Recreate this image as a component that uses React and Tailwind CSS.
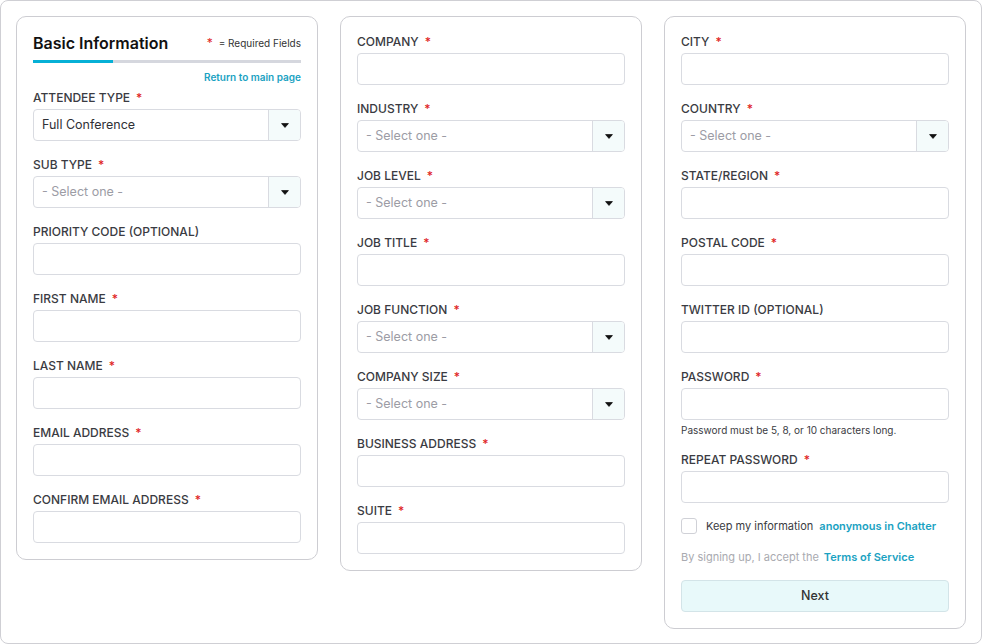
import React from 'react';

const FONT = { fontFamily: 'Inter, "Noto Sans", sans-serif' };

function Label({ text, required }) {
  return (
    <div className="h-4 leading-4 text-[12px] font-medium text-[#3a3b42] pt-px">
      {text}
      {required && <span className="ml-[6px] text-[#e02424]">*</span>}
    </div>
  );
}

function TextInput() {
  return <div className="mt-1 h-8 rounded-[4px] border border-[#d9dbe1] bg-white" />;
}

function Select({ value }) {
  return (
    <div className="mt-1 h-8 flex rounded-[4px] border border-[#d9dbe1] bg-white overflow-hidden">
      <div className={`flex-1 flex items-center pl-[8px] text-[12.5px] ${value ? 'text-[#2f3036]' : 'text-[#9c9ca5]'}`}>
        {value || '- Select one -'}
      </div>
      <div className="w-[32px] flex items-center justify-center border-l border-[#d9dbe1] bg-[#f4fbfb]">
        <svg width="8" height="5" viewBox="0 0 8 5">
          <path d="M0.6 0.6h6.8L4 4.4z" fill="#111" stroke="#111" strokeWidth="0.8" strokeLinejoin="round" />
        </svg>
      </div>
    </div>
  );
}

function Field({ label, required, select, value, children }) {
  return (
    <div>
      <Label text={label} required={required} />
      {select ? <Select value={value} /> : <TextInput />}
      {children}
    </div>
  );
}

function Panel({ children }) {
  return (
    <div className="w-[302px] shrink-0 rounded-[10px] border border-[#cdcdd2] bg-white p-4 flex flex-col">
      {children}
    </div>
  );
}

export default function App() {
  return (
    <div style={FONT} className="w-[982px] h-[644px] bg-white">
      <div className="w-full h-full rounded-lg border border-[#cfcfd4] p-[15px] flex items-start gap-[22px]">
        <Panel>
          <div className="h-5 flex items-center justify-between">
            <div className="text-[16px] leading-5 font-semibold text-[#111]">Basic Information</div>
            <div className="text-[10px] text-[#333] flex items-center">
              <span className="text-[#e02424] text-[12px] mr-[6px]">*</span>= Required Fields
            </div>
          </div>
          <div className="mt-[7px] h-[3px] flex bg-[#d5d7de]">
            <div className="w-[80px] bg-[#06b0d6]" />
          </div>
          <div className="mt-[8px] leading-3 text-right text-[10px] font-semibold text-[#1aa2c2]">Return to main page</div>
          <div className="mt-[6px] flex flex-col gap-[15px]">
            <Field label="ATTENDEE TYPE" required select value="Full Conference" />
            <Field label="SUB TYPE" required select />
            <Field label="PRIORITY CODE (OPTIONAL)" />
            <Field label="FIRST NAME" required />
            <Field label="LAST NAME" required />
            <Field label="EMAIL ADDRESS" required />
            <Field label="CONFIRM EMAIL ADDRESS" required />
          </div>
        </Panel>

        <Panel>
          <div className="flex flex-col gap-[15px]">
            <Field label="COMPANY" required />
            <Field label="INDUSTRY" required select />
            <Field label="JOB LEVEL" required select />
            <Field label="JOB TITLE" required />
            <Field label="JOB FUNCTION" required select />
            <Field label="COMPANY SIZE" required select />
            <Field label="BUSINESS ADDRESS" required />
            <Field label="SUITE" required />
          </div>
        </Panel>

        <Panel>
          <div className="flex flex-col gap-[15px]">
            <Field label="CITY" required />
            <Field label="COUNTRY" required select />
            <Field label="STATE/REGION" required />
            <Field label="POSTAL CODE" required />
            <Field label="TWITTER ID (OPTIONAL)" />
            <Field label="PASSWORD" required>
              <div className="mt-1 leading-3 text-[10px] text-[#3a3b42]">Password must be 5, 8, or 10 characters long.</div>
            </Field>
            <Field label="REPEAT PASSWORD" required />
            <div className="flex items-center h-4">
              <div className="w-4 h-4 rounded-[3px] border border-[#d0d1d7] bg-white" />
              <span className="ml-[9px] text-[11px] text-[#3a3b42]">Keep my information</span>
              <span className="ml-[6px] text-[11px] font-semibold text-[#1aa2c2]">anonymous in Chatter</span>
            </div>
            <div className="flex items-center h-4 text-[11px]">
              <span className="text-[#a9aab0]">By signing up, I accept the</span>
              <span className="ml-[5px] font-semibold text-[#1aa2c2]">Terms of Service</span>
            </div>
            <button className="h-8 rounded-[4px] border border-[#d3e4e8] bg-[#e8f9fa] text-[12.5px] font-medium text-[#333]">
              Next
            </button>
          </div>
        </Panel>
      </div>
    </div>
  );
}
